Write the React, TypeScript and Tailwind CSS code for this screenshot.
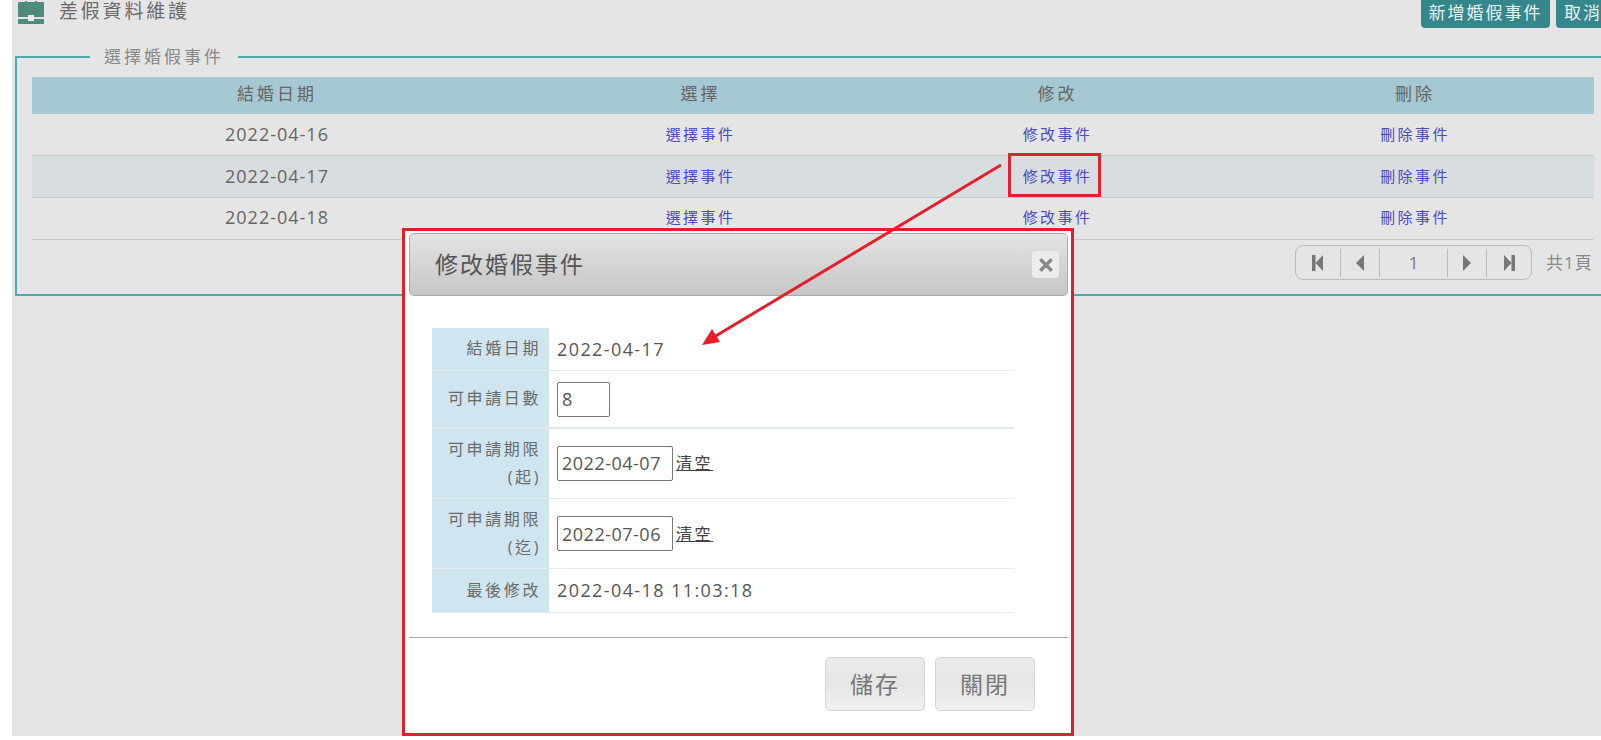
const font = "font-['Open_Sans','Noto_Sans_CJK_TC',sans-serif]"

const rows = [
  { date: "2022-04-16", shift: "" },
  { date: "2022-04-17", shift: "pb-[1px] bg-[#d8dde0]" },
  { date: "2022-04-18", shift: "pb-[2px]" },
]

function BriefcaseIcon() {
  return (
    <svg width="26" height="23" viewBox="0 0 26 23" className="shrink-0">
      <rect x="7" y="-2" width="2" height="4" fill="#4f8b7c" />
      <rect x="17" y="-2" width="2" height="4" fill="#4f8b7c" />
      <rect x="0" y="1" width="26" height="14" rx="1" fill="#4f8b7c" />
      <rect x="0" y="18" width="26" height="5" fill="#4f8b7c" />
      <rect x="0" y="15" width="10" height="1" fill="#4f8b7c" />
      <rect x="16" y="15" width="10" height="1" fill="#4f8b7c" />
      <rect x="10" y="14" width="6" height="6" fill="#e8eeec" />
    </svg>
  )
}

function PagerIcon({ type }: { type: "first" | "prev" | "next" | "last" }) {
  return (
    <svg width="14" height="16" viewBox="0 0 14 16" fill="#777">
      {type === "first" && <path d="M1 0h3.5v16H1zM4.5 8L12 0v16z" />}
      {type === "prev" && <path d="M3 8l8-8v16z" />}
      {type === "next" && <path d="M3 0l8 8-8 8z" />}
      {type === "last" && <path d="M2 0l7.5 8L2 16zM9.5 0H13v16H9.5z" />}
    </svg>
  )
}

function Label({ children }: { children: React.ReactNode }) {
  return (
    <div className="w-[117px] shrink-0 bg-[#cfe6f0] pr-[8px] pb-[2px] flex flex-col justify-center text-right text-[16px] leading-[28px] tracking-[2.6px] text-[#6a6a6a]">
      {children}
    </div>
  )
}

function ClearLink() {
  return <a className="ml-[3px] text-[16px] tracking-[2.6px] text-[#444] underline">清空</a>
}

export default function App() {
  return (
    <div className={`relative w-[1601px] h-[740px] overflow-hidden bg-white ${font}`}>
      <div className="ml-3 h-[736px] bg-[#e5e5e5]">
        <div className="flex h-[28px] items-start">
          <div className="ml-[6px] flex items-center">
            <BriefcaseIcon />
            <span className="ml-[15px] pb-[2px] text-[19px] leading-[22px] tracking-[2.8px] text-[#6a6a6a]">差假資料維護</span>
          </div>
          <button className="ml-auto h-[28px] w-[129px] rounded-b-[4px] bg-[#35878c] pb-[5px] text-[17px] tracking-[2px] text-[#e8f2f2]">
            新增婚假事件
          </button>
          <button className="ml-[6px] h-[28px] w-[60px] mr-[-15px] shrink-0 rounded-b-[4px] bg-[#35878c] pb-[5px] pl-2 text-left text-[17px] tracking-[2px] text-[#e8f2f2]">
            取消
          </button>
        </div>

        <fieldset className="mt-[17px] ml-[3px] mr-[-20px] h-[251px] border-2 border-[#4bacb0] pl-[15px] pr-[25px]">
          <legend className="ml-[58px] px-[14px] h-[24px] text-[17px] leading-[24px] tracking-[3px] text-[#888]">選擇婚假事件</legend>
          <div className="mt-[8px]">
            <div className="grid h-[37px] grid-cols-[490px_357px_357px_358px] items-center bg-[#a6c8d2] pb-[3px] text-center text-[17px] tracking-[3px] text-[#666]">
              <div>結婚日期</div>
              <div>選擇</div>
              <div>修改</div>
              <div>刪除</div>
            </div>
            {rows.map((row) => (
              <div
                key={row.date}
                className={`grid h-[42px] grid-cols-[490px_357px_357px_358px] items-center border-b border-[#c3c9cc] text-center ${row.shift}`}
              >
                <div className="text-[18px] tracking-[1px] text-[#666]">{row.date}</div>
                <a className="text-[15px] tracking-[2.4px] text-[#4a4ac4]">選擇事件</a>
                <a className="text-[15px] tracking-[2.4px] text-[#4a4ac4]">修改事件</a>
                <a className="text-[15px] tracking-[2.4px] text-[#4a4ac4]">刪除事件</a>
              </div>
            ))}
            <div className="mt-[5px] flex items-center justify-end">
              <div className="flex h-[35px] w-[237px] items-center rounded-[8px] border border-[#bbb]">
                <div className="flex h-[28px] w-[45px] items-center justify-center border-r border-[#bbb]"><PagerIcon type="first" /></div>
                <div className="flex h-[28px] w-[39px] items-center justify-center border-r border-[#bbb]"><PagerIcon type="prev" /></div>
                <div className="flex h-[28px] w-[68px] items-center justify-center border-r border-[#bbb] text-[17px] text-[#777]">1</div>
                <div className="flex h-[28px] w-[39px] items-center justify-center border-r border-[#bbb]"><PagerIcon type="next" /></div>
                <div className="flex h-[28px] flex-1 items-center justify-center"><PagerIcon type="last" /></div>
              </div>
              <span className="ml-[14px] w-[48px] whitespace-nowrap text-[17px] tracking-[1px] text-[#888]">共1頁</span>
            </div>
          </div>
        </fieldset>
      </div>

      {/* modal with the red annotation frame */}
      <div className="absolute left-[402px] top-[228px] h-[508px] w-[672px] border-[3px] border-[#e2202c] bg-white">
        <div className="mt-[2px] ml-[4px] mr-[3px] flex h-[63px] items-center justify-between rounded-[5px] border border-[#aaa] bg-gradient-to-b from-[#e4e4e4] to-[#c6c6c6] pl-[25px] pr-[8px]">
          <span className="text-[23px] tracking-[2px] text-[#555]">修改婚假事件</span>
          <div className="flex h-[27px] w-[27px] items-center justify-center rounded-[4px] bg-[#ececec]">
            <svg width="14" height="14" viewBox="0 0 14 14" stroke="#888" strokeWidth="3.4" strokeLinecap="square">
              <path d="M2.5 2.5l9 9M11.5 2.5l-9 9" />
            </svg>
          </div>
        </div>

        <div className="mt-[32px] ml-[27px] w-[582px] text-[#555]">
          <div className="flex h-[43px] border-b border-[#e3ecef]">
            <Label>結婚日期</Label>
            <div className="flex items-center pl-2 text-[18px] tracking-[1.4px]">2022-04-17</div>
          </div>
          <div className="flex h-[58px] border-b-2 border-[#e0e9ec]">
            <Label>可申請日數</Label>
            <div className="flex items-center pl-2">
              <input readOnly value="8" className="h-[35px] w-[53px] rounded-[2px] border border-[#777] pl-1 text-[18px] text-[#555]" />
            </div>
          </div>
          <div className="flex h-[70px] border-b border-[#e3ecef]">
            <Label>可申請期限<br />(起)</Label>
            <div className="flex items-center pl-2 pb-[1px]">
              <input readOnly value="2022-04-07" className="h-[35px] w-[116px] rounded-[2px] border border-[#777] pl-1 text-[18px] tracking-[0.5px] text-[#555]" />
              <ClearLink />
            </div>
          </div>
          <div className="flex h-[70px] border-b border-[#e3ecef]">
            <Label>可申請期限<br />(迄)</Label>
            <div className="flex items-center pl-2">
              <input readOnly value="2022-07-06" className="h-[35px] w-[116px] rounded-[2px] border border-[#777] pl-1 text-[18px] tracking-[0.5px] text-[#555]" />
              <ClearLink />
            </div>
          </div>
          <div className="flex h-[44px] border-b border-[#e3ecef]">
            <Label>最後修改</Label>
            <div className="flex items-center pl-2 text-[18px] tracking-[1.4px]">2022-04-18 11:03:18</div>
          </div>
        </div>

        <div className="mt-[24px] ml-[4px] mr-[3px] border-t border-[#aaa] pt-[19px]">
          <div className="flex justify-end gap-[10px] pr-[33px]">
            <button className="h-[54px] w-[100px] rounded-[5px] border border-[#d4d4d4] bg-gradient-to-b from-[#ebebeb] via-[#e6e6e6] to-[#f1f1f1] text-[23px] tracking-[2px] text-[#777]">儲存</button>
            <button className="h-[54px] w-[100px] rounded-[5px] border border-[#d4d4d4] bg-gradient-to-b from-[#ebebeb] via-[#e6e6e6] to-[#f1f1f1] text-[23px] tracking-[2px] text-[#777]">關閉</button>
          </div>
        </div>
      </div>

      {/* annotation: box around the clicked link and the arrow */}
      <div className="absolute left-[1008px] top-[153px] h-[44px] w-[93px] border-[3px] border-[#e2202c]" />
      <svg className="absolute left-0 top-0 pointer-events-none" width="1601" height="740">
        <path d="M1001 165L714 337" stroke="#e2202c" strokeWidth="3" fill="none" />
        <path d="M702 345L712 329L720 342Z" fill="#ee1c25" />
      </svg>
    </div>
  )
}
